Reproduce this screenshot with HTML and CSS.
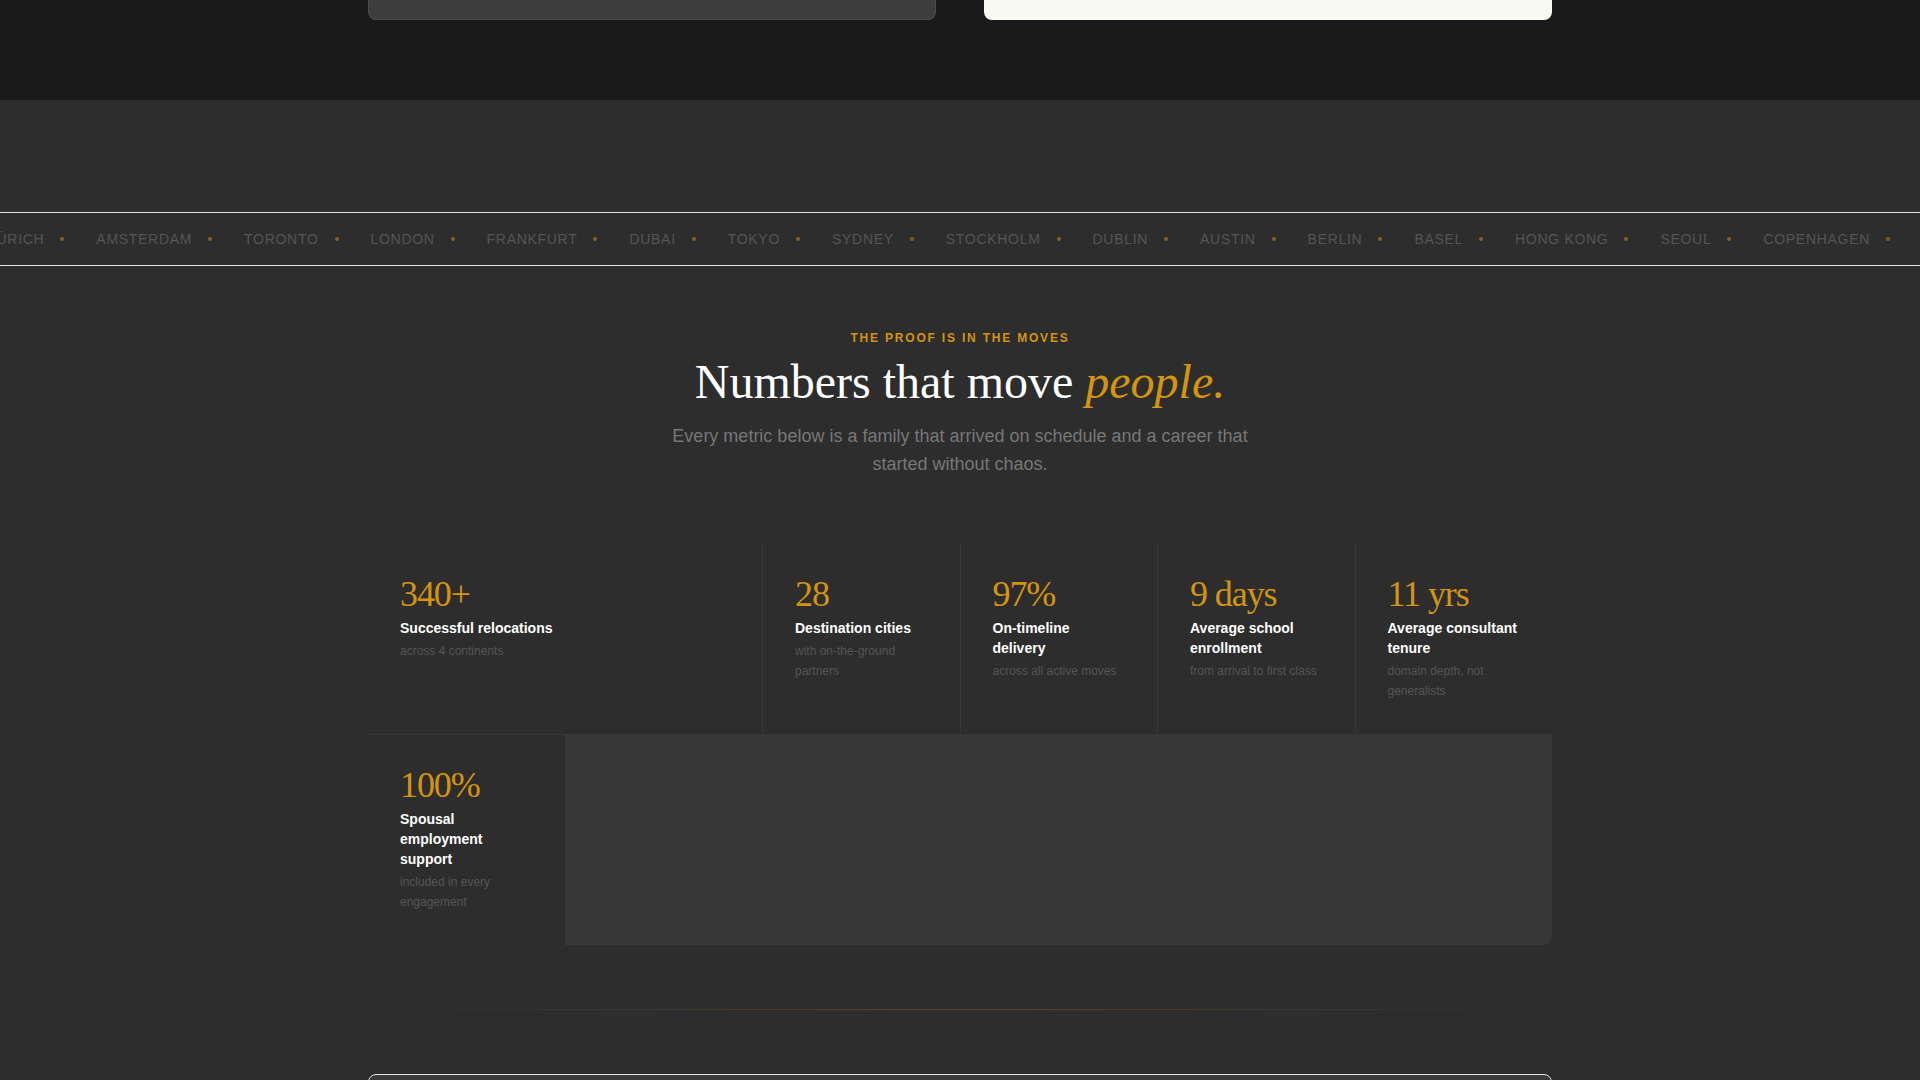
FILE: index.html
```html
<!DOCTYPE html>
<html lang="en">
<head>
    <meta charset="UTF-8">
    <meta name="viewport" content="width=device-width, initial-scale=1.0">
    <title>Numbers that move people</title>
    <link rel="stylesheet" href="styles.css">
</head>
<body>
    <section class="compare">
        <div class="container compare-grid">
            <div class="card card-dark"></div>
            <div class="card card-light"></div>
        </div>
    </section>

    <section class="proof">
        <div class="ticker">
            <ul class="ticker-track">
                <li>Zürich</li>
                <li>Amsterdam</li>
                <li>Toronto</li>
                <li>London</li>
                <li>Frankfurt</li>
                <li>Dubai</li>
                <li>Tokyo</li>
                <li>Sydney</li>
                <li>Stockholm</li>
                <li>Dublin</li>
                <li>Austin</li>
                <li>Berlin</li>
                <li>Basel</li>
                <li>Hong Kong</li>
                <li>Seoul</li>
                <li>Copenhagen</li>
            </ul>
        </div>

        <div class="container">
            <header class="section-header">
                <p class="eyebrow">The proof is in the moves</p>
                <h2>Numbers that move <em>people.</em></h2>
                <p class="subtitle">Every metric below is a family that arrived on schedule and a career that started without chaos.</p>
            </header>

            <div class="stats">
                <div class="stat stat-wide">
                    <div class="stat-number">340+</div>
                    <div class="stat-label">Successful relocations</div>
                    <div class="stat-note">across 4 continents</div>
                </div>
                <div class="stat">
                    <div class="stat-number">28</div>
                    <div class="stat-label">Destination cities</div>
                    <div class="stat-note">with on-the-ground partners</div>
                </div>
                <div class="stat">
                    <div class="stat-number">97%</div>
                    <div class="stat-label">On-timeline delivery</div>
                    <div class="stat-note">across all active moves</div>
                </div>
                <div class="stat">
                    <div class="stat-number">9 days</div>
                    <div class="stat-label">Average school enrollment</div>
                    <div class="stat-note">from arrival to first class</div>
                </div>
                <div class="stat">
                    <div class="stat-number">11 yrs</div>
                    <div class="stat-label">Average consultant tenure</div>
                    <div class="stat-note">domain depth, not generalists</div>
                </div>
                <div class="stat">
                    <div class="stat-number">100%</div>
                    <div class="stat-label">Spousal employment support</div>
                    <div class="stat-note">included in every engagement</div>
                </div>
            </div>

            <hr class="divider">

            <div class="panel"></div>
        </div>
    </section>
</body>
</html>
```
FILE: styles.css
```css
:root {
    --ink: #1a1a1a;
    --charcoal: #2d2d2d;
    --slate: #373737;
    --gold: #d4940f;
    --copper: #b8763a;
    --line: #e8e6e1;
    --sans: "Liberation Sans", Arial, sans-serif;
    --serif: "Liberation Serif", "Times New Roman", serif;
}

* {
    box-sizing: border-box;
    margin: 0;
    padding: 0;
}

body {
    height: 100vh;
    overflow: hidden;
    font-family: var(--sans);
    background-color: var(--charcoal);
    color: #fff;
}

.container {
    max-width: 1280px;
    margin: 0 auto;
    padding: 0 48px;
}

/* Comparison cards */
.compare {
    background-color: var(--ink);
    padding-bottom: 80px;
}

.compare-grid {
    display: grid;
    grid-template-columns: 1fr 1fr;
    gap: 48px;
}

.card {
    height: 20px;
    border-radius: 0 0 8px 8px;
}

.card-dark {
    background-color: #3d3d3d;
    border: 1px solid #4a4a4a;
    border-top: none;
}

.card-light {
    background-color: #fafaf5;
}

/* City ticker */
.proof {
    padding-top: 112px;
}

.ticker {
    overflow: hidden;
    border-top: 1px solid var(--line);
    border-bottom: 1px solid var(--line);
    padding: 16px 0;
}

.ticker-track {
    display: flex;
    justify-content: flex-end;
    gap: 32px;
    padding-right: 30px;
    list-style: none;
}

.ticker-track li {
    display: flex;
    flex-shrink: 0;
    align-items: center;
    gap: 16px;
    font-size: 14px;
    line-height: 20px;
    letter-spacing: 0.05em;
    text-transform: uppercase;
    white-space: nowrap;
    color: #555;
}

.ticker-track li::after {
    content: "";
    width: 4px;
    height: 4px;
    border-radius: 50%;
    background-color: var(--gold);
    opacity: 0.5;
}

/* Section header */
.section-header {
    max-width: 600px;
    margin: 0 auto;
    padding: 64px 0 66px;
    text-align: center;
}

.eyebrow {
    font-size: 12px;
    font-weight: 700;
    line-height: 16px;
    letter-spacing: 0.15em;
    text-transform: uppercase;
    color: var(--gold);
    margin-bottom: 8px;
}

h2 {
    font-family: var(--serif);
    font-size: 48px;
    font-weight: 400;
    line-height: 56px;
    margin-bottom: 12px;
}

h2 em {
    color: var(--gold);
}

.subtitle {
    font-size: 18px;
    line-height: 28px;
    color: #777;
}

/* Stats */
.stats {
    display: grid;
    grid-template-columns: repeat(6, 1fr);
    gap: 1px;
    border-radius: 8px;
    overflow: hidden;
    background-color: var(--slate);
}

.stat {
    background-color: var(--charcoal);
    padding: 32px 32px 33px;
}

.stat-wide {
    grid-column: span 2;
}

.stat-number {
    font-family: var(--serif);
    font-size: 36px;
    line-height: 36px;
    letter-spacing: -0.03em;
    color: var(--gold);
    margin-bottom: 6px;
}

.stat-label {
    font-size: 14px;
    font-weight: 700;
    line-height: 20px;
    margin-bottom: 3px;
}

.stat-note {
    font-size: 12px;
    line-height: 20px;
    color: #555;
}

.divider {
    height: 1px;
    border: none;
    margin: 64px 0;
    background: linear-gradient(90deg, transparent, var(--copper), transparent);
    opacity: 0.3;
}

.panel {
    height: 48px;
    border: 1px solid var(--line);
    border-radius: 8px;
    background-color: #3a3a3a;
}
```
